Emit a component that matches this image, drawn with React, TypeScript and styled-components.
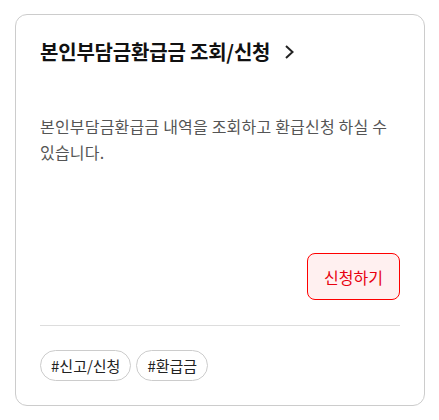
import React from "react";
import styled, { createGlobalStyle } from "styled-components";

const Global = createGlobalStyle`
  html, body { margin: 0; padding: 0; background: #fff; }
  body { font-family: "Noto Sans CJK KR", "Noto Sans", sans-serif; }
  * { box-sizing: border-box; }
`;

const Page = styled.div`
  padding: 14px 14px 14px 15px;
`;

const Card = styled.div`
  width: 410px;
  height: 392px;
  border: 1px solid #cccccc;
  border-radius: 12px;
  padding: 23px 24px 24px 24px;
  display: flex;
  flex-direction: column;
`;

const TitleRow = styled.a`
  display: flex;
  align-items: center;
  gap: 13px;
  color: #111;
  text-decoration: none;
  font-size: 20px;
  font-weight: 700;
  line-height: 28px;
  letter-spacing: -0.2px;
`;

const Desc = styled.p`
  margin: 47px 0 0;
  font-size: 16px;
  line-height: 26px;
  color: #555;
  letter-spacing: 0.2px;
`;

const Actions = styled.div`
  margin-top: auto;
  display: flex;
  justify-content: flex-end;
`;

const ApplyButton = styled.button`
  width: 93px;
  height: 47px;
  border: 1px solid #ff0000;
  border-radius: 8px;
  background: #fff0f0;
  color: #e8000f;
  font-family: inherit;
  font-size: 16px;
  cursor: pointer;
`;

const Divider = styled.hr`
  margin: 25px 0 0;
  border: 0;
  border-top: 1px solid #dddddd;
`;

const Tags = styled.div`
  display: flex;
  gap: 5px;
  margin-top: 24px;
`;

const Tag = styled.span`
  display: inline-flex;
  align-items: center;
  height: 31px;
  padding: 0 10px;
  border: 1px solid #cccccc;
  border-radius: 16px;
  font-size: 15px;
  color: #222;
`;

export default function App() {
  return (
    <>
      <Global />
      <Page>
        <Card>
          <TitleRow href="#">
            본인부담금환급금 조회/신청
            <svg width="12" height="16" viewBox="0 0 12 16" fill="none">
              <path d="M3 2 L9.5 8 L3 14" stroke="#222" strokeWidth="2" />
            </svg>
          </TitleRow>
          <Desc>본인부담금환급금 내역을 조회하고 환급신청 하실 수 있습니다.</Desc>
          <Actions>
            <ApplyButton>신청하기</ApplyButton>
          </Actions>
          <Divider />
          <Tags>
            <Tag>#신고/신청</Tag>
            <Tag>#환급금</Tag>
          </Tags>
        </Card>
      </Page>
    </>
  );
}
